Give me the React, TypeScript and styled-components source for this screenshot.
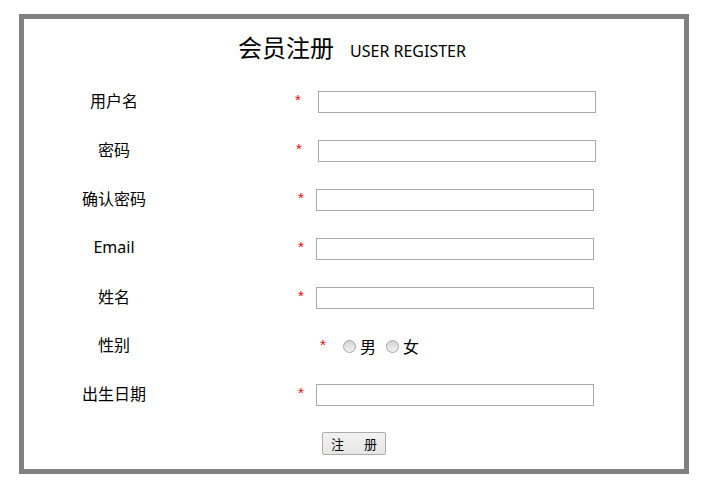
import { FC } from "react";
import styled, { createGlobalStyle } from "styled-components";

const GlobalStyle = createGlobalStyle`
  body {
    margin: 8px;
    background: #fff;
    font-family: "Noto Sans", "Noto Sans CJK SC", sans-serif;
    color: #000;
  }
`;

interface Field {
  label: string;
  starAt: number;
  gap: number;
}

const fields: Field[] = [
  { label: "用户名", starAt: 91, gap: 15 },
  { label: "密码", starAt: 92, gap: 14 },
  { label: "确认密码", starAt: 94, gap: 10 },
  { label: "Email", starAt: 94, gap: 10 },
  { label: "姓名", starAt: 94, gap: 10 },
];

const App: FC = () => {
  return (
    <>
      <GlobalStyle />
      <Box>
        <Header>
          <Title>会员注册</Title>
          <SubTitle>USER REGISTER</SubTitle>
        </Header>
        {fields.map((f) => (
          <Row key={f.label}>
            <Label>{f.label}</Label>
            <Cell>
              <Star $at={f.starAt}>*</Star>
              <Input type="text" $gap={f.gap} />
            </Cell>
          </Row>
        ))}
        <Row $height={48}>
          <Label>性别</Label>
          <Cell>
            <Star $at={116}>*</Star>
            <Choice $gap={15}>
              <Radio type="radio" name="sex" />
              <span>男</span>
            </Choice>
            <Choice $gap={10}>
              <Radio type="radio" name="sex" />
              <span>女</span>
            </Choice>
          </Cell>
        </Row>
        <Row>
          <Label>出生日期</Label>
          <Cell>
            <Star $at={94}>*</Star>
            <Input type="text" $gap={10} />
          </Cell>
        </Row>
        <ButtonRow>
          <Submit type="button">
            <span>注</span>
            <span>册</span>
          </Submit>
        </ButtonRow>
      </Box>
    </>
  );
};

export default App;

const Box = styled.div`
  width: 660px;
  height: 450px;
  margin: 6px 0 0 11px;
  border: 5px solid #808080;
`;

const Header = styled.div`
  height: 58px;
  display: flex;
  justify-content: center;
  align-items: baseline;
  gap: 16px;
  padding: 12px 4px 0 0;
  box-sizing: border-box;
`;

const Title = styled.span`
  font-family: "Noto Sans CJK SC", sans-serif;
  font-size: 24px;
  line-height: 32px;
`;

const SubTitle = styled.span`
  font-family: "Noto Sans", sans-serif;
  font-size: 16px;
`;

const Row = styled.div<{ $height?: number }>`
  display: flex;
  align-items: center;
  height: ${(p) => p.$height ?? 49}px;
`;

const Label = styled.div`
  width: 180px;
  text-align: center;
  font-family: "Noto Sans", "Noto Sans CJK SC", sans-serif;
  font-size: 16px;
  padding-bottom: 4px;
`;

const Cell = styled.div`
  display: flex;
  align-items: center;
`;

const Star = styled.span<{ $at: number }>`
  display: inline-block;
  width: 8px;
  margin-left: ${(p) => p.$at}px;
  color: #f00;
  font-family: "Liberation Sans", sans-serif;
  font-size: 15px;
  line-height: 22px;
  align-self: flex-start;
  margin-top: -2px;
`;

const Input = styled.input<{ $gap: number }>`
  margin: 0 0 0 ${(p) => p.$gap}px;
  width: 278px;
  height: 22px;
  box-sizing: border-box;
  border: 1px solid #a9a9a9;
  background: #fff;
  padding: 0 4px;
  outline: none;
`;

const Choice = styled.label<{ $gap: number }>`
  display: inline-flex;
  align-items: center;
  gap: 4px;
  margin-left: ${(p) => p.$gap}px;
  font-family: "Noto Sans CJK SC", sans-serif;
  font-size: 16px;
  line-height: 20px;
`;

const Radio = styled.input`
  appearance: none;
  margin: 0;
  width: 13px;
  height: 13px;
  border-radius: 50%;
  border: 1px solid #a6a6a6;
  background: linear-gradient(#d4d4d4, #f2f2f2);
  box-sizing: border-box;
`;

const ButtonRow = styled.div`
  display: flex;
  justify-content: center;
  align-items: center;
  height: 49px;
`;

const Submit = styled.button`
  display: inline-flex;
  justify-content: space-between;
  align-items: center;
  width: 64px;
  height: 23px;
  padding: 0 8px;
  box-sizing: border-box;
  border: 1px solid #acacac;
  border-radius: 2px;
  background: linear-gradient(#f2f2f2, #e6e6e6);
  font-family: "Noto Sans CJK SC", sans-serif;
  font-size: 13px;
  color: #000;
`;
